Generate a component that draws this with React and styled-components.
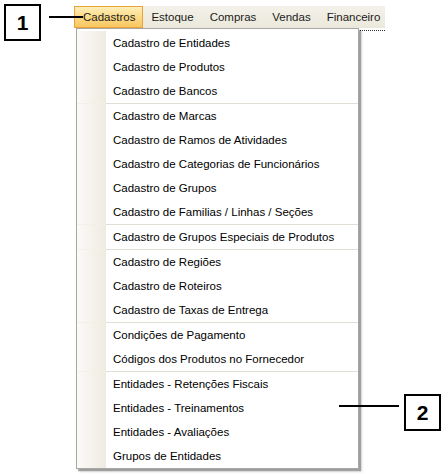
import React from 'react';
import styled, {createGlobalStyle} from 'styled-components';

const topItems = ['Cadastros', 'Estoque', 'Compras', 'Vendas', 'Financeiro'];

const groups = [
  ['Cadastro de Entidades', 'Cadastro de Produtos', 'Cadastro de Bancos'],
  [
    'Cadastro de Marcas',
    'Cadastro de Ramos de Atividades',
    'Cadastro de Categorias de Funcionários',
    'Cadastro de Grupos',
    'Cadastro de Familias / Linhas / Seções',
  ],
  ['Cadastro de Grupos Especiais de Produtos'],
  ['Cadastro de Regiões', 'Cadastro de Roteiros', 'Cadastro de Taxas de Entrega'],
  ['Condições de Pagamento', 'Códigos dos Produtos no Fornecedor'],
  [
    'Entidades - Retenções Fiscais',
    'Entidades - Treinamentos',
    'Entidades - Avaliações',
    'Grupos de Entidades',
  ],
];

const App = () => {
  return (
    <>
      <GlobalStyle/>
      <Stage>
        <Window>
          <MenuBar>
            {topItems.map((item, i) => (
              <TopItem key={item} active={i === 0}>{item}</TopItem>
            ))}
          </MenuBar>
          <Dotted/>

          {/* open dropdown of "Cadastros" */}
          <Dropdown>
            {groups.map((group, gi) => (
              <React.Fragment key={gi}>
                {gi > 0 && <Separator/>}
                {group.map((label) => (
                  <MenuItem key={label}>
                    <Gutter/>
                    <Label>{label}</Label>
                  </MenuItem>
                ))}
              </React.Fragment>
            ))}
          </Dropdown>
        </Window>

        {/* annotation callouts */}
        <Callout left={4} top={4}>1</Callout>
        <Leader left={49} top={16} width={34}/>

        <Callout left={404} top={394}>2</Callout>
        <Leader left={339} top={405} width={60}/>
      </Stage>
    </>
  );
};

export default App;

const GlobalStyle = createGlobalStyle`
  html, body {
    margin: 0;
    padding: 0;
    background: #fff;
  }
`;

const Stage = styled.div`
  position: relative;
  width: 448px;
  height: 474px;
  overflow: hidden;
  background: #fff;
  font-family: "Liberation Sans", Arial, sans-serif;
  font-size: 11.5px;
  color: #000;
  padding: 6px 0 0 74px;
  box-sizing: border-box;
`;

const Window = styled.div`
  position: relative;
  width: 311px;
  display: flex;
  flex-direction: column;
`;

const MenuBar = styled.div`
  display: flex;
  height: 22px;
  background: linear-gradient(to bottom, #f3f1e9, #ebe8db);
`;

const TopItem = styled.div`
  display: flex;
  align-items: center;
  padding: ${({active}) => (active ? '0 7px 0 8px' : '0 7px')};
  box-sizing: border-box;
  border: 1px solid ${({active}) => (active ? '#e9a43c' : 'transparent')};
  background: ${({active}) => (active
    ? 'linear-gradient(to bottom, #fdeeb9 0%, #fbd983 55%, #f8c660 100%)'
    : 'transparent')};
  color: #1b1b1b;
`;

const Dotted = styled.div`
  align-self: flex-end;
  margin-top: 2px;
  width: 27px;
  border-top: 1px dotted #333;
`;

const Dropdown = styled.div`
  position: absolute;
  left: 2px;
  top: 22px;
  width: 283px;
  box-sizing: border-box;
  padding: 2px 0 0;
  background: #fff;
  border: 1px solid #a9a7a2;
  box-shadow: 2px 2px 1px rgba(0, 0, 0, 0.28), 3px 3px 2px rgba(0, 0, 0, 0.14);
  display: flex;
  flex-direction: column;
`;

const MenuItem = styled.div`
  display: flex;
  height: 24px;
  align-items: center;
`;

const Gutter = styled.div`
  align-self: stretch;
  width: 29px;
  flex: none;
  background: linear-gradient(to right, #fbfaf7, #efebe2);
`;

const Label = styled.span`
  padding-left: 7px;
  white-space: nowrap;
`;

const Separator = styled.div`
  height: 1px;
  margin-left: 29px;
  background: #e2ded3;
  box-shadow: -29px 0 0 0 #f3f0ea;
`;

const Callout = styled.div`
  position: absolute;
  left: ${({left}) => left}px;
  top: ${({top}) => top}px;
  width: 37px;
  height: 37px;
  box-sizing: border-box;
  border: 2px solid #000;
  background: #fff;
  display: flex;
  align-items: center;
  justify-content: center;
  font-family: "Liberation Sans", Arial, sans-serif;
  font-weight: bold;
  font-size: 21px;
`;

const Leader = styled.div`
  position: absolute;
  left: ${({left}) => left}px;
  top: ${({top}) => top}px;
  width: ${({width}) => width}px;
  height: 2px;
  background: #000;
`;
